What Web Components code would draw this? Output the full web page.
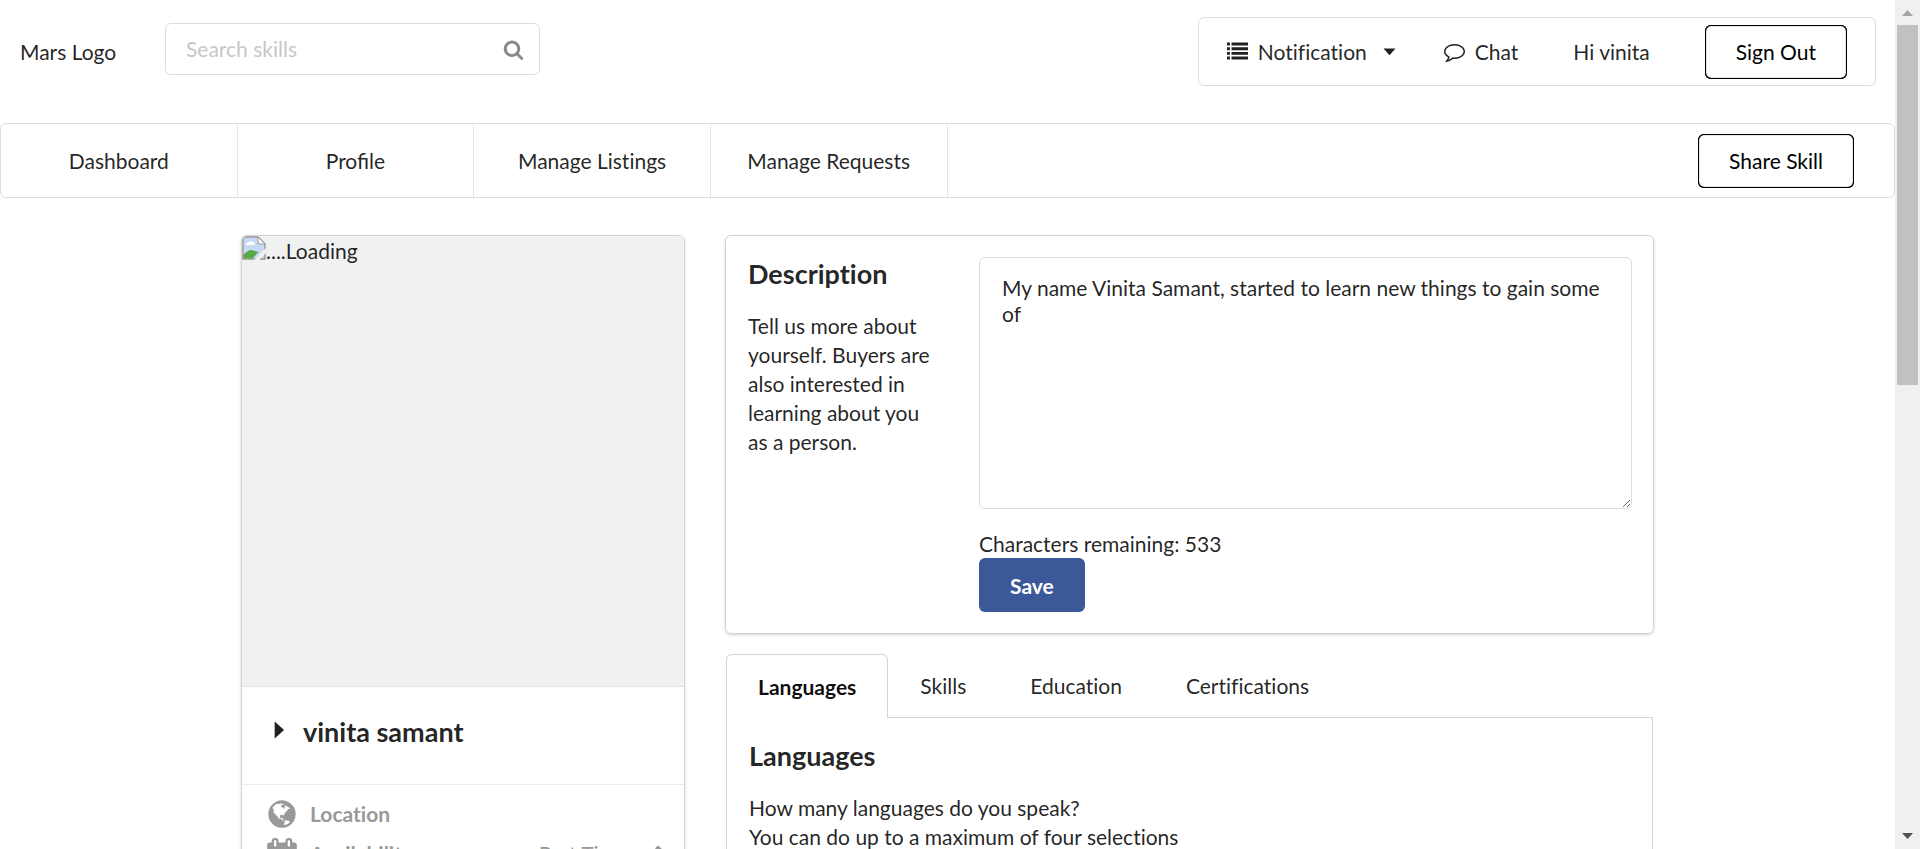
<!DOCTYPE html>
<html lang="en">
<head>
<meta charset="utf-8">
<title>Profile</title>
<style>
html, body { margin: 0; height: 100%; }
body { font: 21px/30px Lato, sans-serif; color: rgba(0,0,0,.87); background: #fff; overflow: hidden; font-variant-ligatures: no-common-ligatures; }
</style>
</head>
<body>
<mars-app></mars-app>
<script>
const ICONS = {
  search: '<path d="M1216 832q0-185-131.500-316.500t-316.500-131.500-316.500 131.500-131.500 316.500 131.500 316.500 316.500 131.500 316.500-131.500 131.500-316.500zm512 832q0 52-38 90t-90 38q-54 0-90-38l-343-342q-179 124-399 124-143 0-273.500-55.500t-225-150-150-225-55.500-273.500 55.500-273.500 150-225 225-150 273.500-55.500 273.500 55.500 225 150 150 225 55.500 273.500q0 220-124 399l343 343q37 37 37 90z"/>',
  list: '<path d="M0 130h250v250h-250zM384 130h1408v250h-1408zM0 530h250v250h-250zM384 530h1408v250h-1408zM0 930h250v250h-250zM384 930h1408v250h-1408zM0 1330h250v250h-250zM384 1330h1408v250h-1408z"/>',
  comment: '<path d="M896 384q-204 0-381.500 69.500t-282 187.500-104.500 255q0 112 71.500 213.500t201.500 175.500l87 50-27 96q-24 91-70 172 152-63 275-171l43-38 57 6q69 8 130 8 204 0 381.500-69.500t282-187.500 104.500-255-104.500-255-282-187.500-381.500-69.500zm896 512q0 174-120 321.500t-326 233-450 85.500q-70 0-145-8-198 175-460 242-49 14-114 22h-5q-15 0-27-10.500t-16-27.500v-1q-3-4-.5-12t2-10 4.500-9.500l6-9 7-8.500 8-9q7-8 31-34.500t34.500-38 31-39.500 32.500-51 27-59 26-76q-157-89-247.500-220t-90.500-281q0-174 120-321.500t326-233 450-85.500 450 85.500 326 233 120 321.500z"/>',
  down: '<path d="M384 640h1024l-512 576z"/>',
  right: '<path d="M500 256l700 640-700 640z"/>',
  world: '<path d="M896 128q209 0 385.500 103t279.500 279.500 103 385.500-103 385.500-279.500 279.500-385.500 103-385.500-103-279.500-279.500-103-385.500 103-385.500 279.500-279.500 385.500-103zm274 521q-2 1-9.500 9.500t-13.500 9.500q2 0 4.500-5t5-11 3.500-7q6-7 22-15 14-6 52-12 34-8 51 11-2-2 9.500-13t14.500-12q3-2 15-4.500t15-7.500l2-22q-12 1-17.500-7t-6.500-21q0 2-6 8 0-7-4.500-8t-11.500 1-9 1q-10-3-15-7.500t-8-16.500-4-15q-2-5-9.500-10.500t-9.500-10.500q-1-2-2.500-5.500t-3-6.500-4-5.500-5.500-2.500-7 5-7.500 10-4.500 5q-3-2-6-1.500t-4.500 1-4.500 3-5 3.500q-3 2-8.500 3t-8.500 2q15-5-1-11-10-4-16-3 9-4 7.500-12t-8.500-14h5q-1-4-8.500-8.500t-17.500-8.500-13-6q-8-5-34-9.500t-33-.5q-5 6-4.500 10.500t4 14 3.500 12.500q1 6-5.500 13t-6.500 12q0 7 14 15.500t10 21.500q-3 8-16 16t-16 12q-5 8-1.500 18.500t10.500 16.500q2 2 1.500 4t-3.500 4.500-5.500 4-6.500 3.500l-3 2q-11 5-20.500-6t-13.500-26q-7-25-16-30-23-8-29 1-5-13-41-26-25-9-58-4 6-1 0-15-7-15-19-12 3-6 4-17.500t1-13.500q3-13 12-23 1-1 7-8.500t9.500-13.500.5-6q35 4 50-11 5-5 11.500-17t10.500-17q9-6 14-5.500t14.500 5.500 14.500 5q14 1 15.500-11t-7.500-20q12 1 3-17-4-7-8-9-12-4-27 5-8 4 2 8-1-1-9.500 10.500t-16.500 17.500-16-5q-1-1-5.500-13.500t-9.500-13.500q-8 0-16 15 3-8-11-15t-24-8q19-12-8-27-7-4-20.500-5t-19.500 4q-5 7-5.500 11.500t5 8 10.500 5.500 11.500 4 8.500 3q14 10 8 14-2 1-8.500 3.500t-11.500 4.500-6 4q-3 4 0 14t-2 14q-5-5-9-17.500t-7-16.500q7 9-25 6l-10-1q-4 0-16 2t-20.500 1-13.500-8q-4-8 0-20 1-4 4-2-4-3-11-9.500t-10-8.500q-46 15-94 41 6 1 12-1 5-2 13-6.500t10-5.500q34-14 42-7l5-5q14 16 20 25-7-4-30-1-20 6-22 12 7 12 5 18-4-3-11.500-10t-14.500-11-15-5q-16 0-22 1-146 80-235 222 7 7 12 8 4 1 5 9t2.500 11 11.500-3q9 8 3 19 1-1 44 27 19 17 21 21 3 11-10 18-1-2-9-9t-9-4q-3 5 .5 18.500t10.500 12.500q-7 0-9.500 16t-2.500 35.500-1 23.500l2 1q-3 12 5.500 34.500t21.500 19.500q-13 3 20 43 6 8 8 9 3 2 12 7.500t15 10 10 10.500q4 5 10 22.500t14 23.500q-2 6 9.500 20t10.500 23q-1 0-2.500 1t-2.500 1q3 7 15.500 14t15.500 13q1 3 2 10t3 11 8 2q2-20-24-62-15-25-17-29-3-5-5.500-15.500t-4.500-14.500q2 0 6 1.500t8.500 3.500 7.500 4 2 3q-3 7 2 17.500t12 18.500 17 19 12 13q6 6 14 19.500t0 13.500q9 0 20 10.500t17 19.500q5 8 8 26t5 24q2 7 8.500 13.500t12.500 9.500l16 8 13 7q5 2 18.500 10.500t21.500 11.500q10 4 16 4t14.500-2.500 13.500-3.500q15-2 29 15t21 21q36 19 55 11-2 1 .5 7.500t8 15.500 9 14.500 5.500 8.500q5 6 18 15t18 15q6-4 7-9-3 8 7 20t18 10q14-3 14-32-31 15-49-18 0-1-2.500-5.500t-4-8.500-2.500-8.500 0-7.500 5-3q9 0 10-3.500t-2-12.500-4-13q-1-8-11-20t-12-15q-5 9-16 8t-16-9q0 1-1.500 5.500t-1.500 6.500q-13 0-15-1 1-3 2.500-17.500t3.500-22.500q1-4 5.500-12t7.500-14.500 4-12.500-4.500-9.500-17.500-2.500q-19 1-26 20-1 3-3 10.500t-5 11.500-9 7q-7 3-24 2t-24-5q-13-8-22.500-29t-9.500-37q0-10 2.500-26.500t3-25-5.500-24.500q3-2 9-9.500t10-10.500q2-1 4.500-1.500t4.500 0 4-1.500 3-6q-1-1-4-3-3-3-4-3 7 3 28.500-1.500t27.500 1.500q15 11 22-2 0-1-2.500-9.500t-.5-13.500q5 27 29 9 3 3 15.500 5t17.500 5q3 2 7 5.500t5.500 4.500 5-.5 8.500-6.500q10 14 12 24 11 40 19 44 7 3 11 2t4.500-9.500 0-14-1.500-12.500l-1-8v-18l-1-8q-15-3-18.500-12t1.500-18.500 15-18.500q1-1 8-3.500t15.500-6.500 12.500-8q21-19 15-35 7 0 11-9-1 0-5-3t-7.500-5-4.500-2q9-5 2-16 5-3 7.500-11t7.500-10q9 12 21 2 8-8 1-16 5-7 20.500-10.500t18.500-9.500q7 2 8-2t1-12 3-12q4-5 15-9t13-5l17-11q3-4 0-4 18 2 31-11 10-11-6-20 3-6-3-9.500t-15-5.500q3-1 11.500-.5t10.500-1.500q15-10-7-16-17-5-43 12zm-163 877q206-36 351-189-3-3-12.500-4.500t-12.500-3.500q-18-7-24-8 1-7-2.500-13t-8-9-12.500-8-11-7q-2-2-7-6t-7-5.500-7.500-4.500-8.500-2-10 1l-3 1q-3 1-5.500 2.500t-5.500 3-4 3 0 2.500q-21-17-36-22-5-1-11-5.500t-10.500-7-10-1.500-11.500 7q-5 5-6 15t-2 13q-7-5 0-17.500t2-18.500q-3-6-10.500-4.500t-12 4.500-11.500 8.500-9 6.500-8.500 5.500-8.500 7.500q-3 4-6 12t-5 11q-2-4-11.500-6.500t-9.500-5.500q2 10 4 35t5 38q7 31-12 48-27 25-29 40-4 22 12 26 0 7-8 20.500t-7 21.500q0 6 2 16z"/>',
  calendar: '<path d="M192 1664h288v-288h-288v288zm352 0h320v-288h-320v288zm-352-352h288v-320h-288v320zm352 0h320v-320h-320v320zm-352-384h288v-288h-288v288zm736 736h320v-288h-320v288zm-384-736h320v-288h-320v288zm768 736h288v-288h-288v288zm-384-352h320v-320h-320v320zm-352-864v-288q0-13-9.5-22.500t-22.500-9.500h-64q-13 0-22.500 9.500t-9.500 22.500v288q0 13 9.500 22.500t22.500 9.500h64q13 0 22.500-9.500t9.500-22.500zm736 864h288v-320h-288v320zm-384-384h320v-288h-320v288zm384 0h288v-288h-288v288zm32-480v-288q0-13-9.5-22.500t-22.500-9.500h-64q-13 0-22.500 9.500t-9.500 22.500v288q0 13 9.500 22.500t22.500 9.500h64q13 0 22.500-9.500t9.500-22.500zm384-64v1280q0 52-38 90t-90 38h-1408q-52 0-90-38t-38-90v-1280q0-52 38-90t90-38h128v-96q0-66 47-113t113-47h64q66 0 113 47t47 113v96h384v-96q0-66 47-113t113-47h64q66 0 113 47t47 113v96h128q52 0 90 38t38 90z"/>',
  write: '<path d="M491 1536l91-91-235-235-91 91v107h128v128h107zm523-928q0-22-22-22-10 0-17 7l-542 542q-7 7-7 17 0 22 22 22 10 0 17-7l542-542q7-7 7-17zm-54-192l416 416-832 832h-416v-416zm683 96q0 53-37 90l-166 166-416-416 166-165q36-38 90-38 53 0 91 38l235 234q37 39 37 91z"/>'
};

function define(name, css, html) {
  const template = document.createElement('template');
  template.innerHTML = `<style>*{box-sizing:border-box}:host{display:block;box-sizing:border-box}${css}</style>${html}`;
  customElements.define(name, class extends HTMLElement {
    constructor() {
      super();
      this.attachShadow({ mode: 'open' }).append(template.content.cloneNode(true));
    }
  });
}

customElements.define('ui-icon', class extends HTMLElement {
  connectedCallback() {
    if (this.shadowRoot) return;
    this.attachShadow({ mode: 'open' }).innerHTML =
      `<style>:host{display:block;flex:none;width:21px;height:21px}svg{display:block;width:100%;height:100%}</style>
       <svg viewBox="0 0 1792 1792" fill="currentColor" aria-hidden="true">${ICONS[this.getAttribute('name')]}</svg>`;
  }
});

define('ui-button', `
  button { display: block; height: 54px; padding: 0 31px; border: 0; border-radius: 6px; box-shadow: inset 0 0 0 1px #000, inset 0 0 1px 1px #000;
    background: #fff; color: #000; font: inherit; line-height: 21px; }
  :host([primary]) button { box-shadow: none; background: #3b5998; color: #fff; font-weight: 700; }
`, `<button type="button"><slot></slot></button>`);

define('skill-search', `
  :host { width: 375px; }
  label { display: flex; align-items: center; height: 52px; padding: 0 15px 0 20px;
    border: 1px solid #dcddde; border-radius: 6px; }
  input { flex: 1; min-width: 0; border: 0; padding: 0; outline: 0; background: none; font: inherit; color: inherit; }
  input::placeholder { color: #c7c7c7; opacity: 1; }
  ui-icon { color: #8a8a8a; }
`, `<label><input type="text" placeholder="Search skills" aria-label="Search skills"><ui-icon name="search"></ui-icon></label>`);

define('account-menu', `
  nav { display: flex; align-items: center; height: 69px; padding: 0 28px; border: 1px solid #dcddde; border-radius: 6px; }
  a { display: flex; align-items: center; color: inherit; text-decoration: none; white-space: nowrap; }
  .notify { gap: 10px; margin-right: 44px; }
  .chat { gap: 10px; margin-right: 55px; }
  .hi { margin-right: 55px; }
  .notify ui-icon:last-child { margin-left: 2px; }
`, `<nav aria-label="Account">
  <a class="notify" href="#"><ui-icon name="list"></ui-icon><span>Notification</span><ui-icon name="down"></ui-icon></a>
  <a class="chat" href="#"><ui-icon name="comment"></ui-icon><span>Chat</span></a>
  <a class="hi" href="#">Hi vinita</a>
  <ui-button>Sign Out</ui-button>
</nav>`);

define('top-bar', `
  :host { display: flex; align-items: flex-start; padding: 17px 19px 0 20px; height: 123px; }
  .brand { color: inherit; text-decoration: none; margin-top: 20px; width: 145px; }
  skill-search { margin-top: 6px; }
  account-menu { margin-left: auto; }
`, `<a class="brand" href="#">Mars Logo</a><skill-search></skill-search><account-menu></account-menu>`);

define('section-nav', `
  nav { display: flex; align-items: center; height: 75px; border: 1px solid #dcddde; border-radius: 6px; }
  a { display: flex; align-items: center; justify-content: center; flex: 0 0 12.5%; height: 100%;
    border-right: 1px solid #e6e6e7; color: inherit; text-decoration: none; white-space: nowrap; }
  .profile { font-variant-ligatures: normal; }
  ui-button { margin: 0 40px 0 auto; }
`, `<nav aria-label="Sections"><a href="#">Dashboard</a><a class="profile" href="#">Profile</a><a href="#">Manage Listings</a><a href="#">Manage Requests</a><ui-button>Share Skill</ui-button></nav>`);

define('detail-row', `
  :host { display: flex; align-items: center; height: 40px; color: #999; }
  b { margin-left: 12px; flex: 1; }
`, `<slot name="icon"></slot><b><slot></slot></b><slot name="value"></slot>`);

define('profile-card', `
  :host { border: 1px solid #d4d4d5; border-radius: 6px; box-shadow: 0 1px 3px #d4d4d5; overflow: hidden; background: #fff; }
  .photo { display: flex; height: 451px; background: #f1f1f1; border-bottom: 1px solid #e4e4e4; }
  .photo svg { flex: none; width: 24px; height: 24px; }
  .name { display: flex; align-items: center; height: 98px; padding: 0 22px 8px; border-bottom: 1px solid #ececec; }
  h2 { margin: 0 0 0 7px; font-size: 27px; line-height: 36px; }
  .name ui-icon { width: 32px; height: 24px; margin-bottom: 4px; }
  .details { padding: 9px 20px 40px 24px; }
  .details ui-icon { width: 32px; height: 32px; }
  .value { display: flex; align-items: center; gap: 16px; }
  .value ui-icon { width: 21px; height: 21px; }
`, `<div class="photo" role="img" aria-label="Loading">
    <svg viewBox="0 0 24 24">
      <path d="M1 1h15l7 7v15H1z" fill="#c6d9f5" stroke="#9a9a9a" stroke-width="1.500"/>
      <path d="M4 9q0-3 3-3 2-2 4 0 2 0 2 3z" fill="#fff"/>
      <path d="M1.500 22.500V19q6-7 11-4l4 1-6 6.500z" fill="#58a843"/>
      <path d="M16 1l7 7h-7z" fill="#fff" stroke="#9a9a9a"/>
      <path d="M12 24L24 12v5l-7 7z" fill="#f1f1f1"/>
    </svg><span>....Loading</span></div>
  <div class="name"><ui-icon name="right"></ui-icon><h2>vinita samant</h2></div>
  <div class="details">
    <detail-row><ui-icon slot="icon" name="world"></ui-icon>Location</detail-row>
    <detail-row><ui-icon slot="icon" name="calendar"></ui-icon>Availability<span class="value" slot="value">Part Time<ui-icon name="write"></ui-icon></span></detail-row>
  </div>`);

define('description-card', `
  :host { display: grid; grid-template-columns: 185px 1fr; gap: 46px; padding: 21px 21px 21px 22px;
    border: 1px solid #d4d4d5; border-radius: 6px; box-shadow: 0 1px 3px #d4d4d5; }
  h3 { margin: 0 0 20px; font-size: 27px; line-height: 34px; }
  p { margin: 0; line-height: 29px; }
  textarea { display: block; width: 100%; height: 252px; padding: 17px 22px; border: 1px solid #dcddde; border-radius: 6px;
    font: inherit; line-height: 26px; color: inherit; background: #fff; resize: vertical; outline: 0; }
  .count { margin-top: 21px; line-height: 28px; }
  ui-button { width: max-content; }
`, `<div><h3>Description</h3><p>Tell us more about yourself. Buyers are also interested in learning about you as a person.</p></div>
  <div><textarea aria-label="Description">My name Vinita Samant, started to learn new things to gain some of</textarea>
  <div class="count">Characters remaining: 533</div><ui-button primary>Save</ui-button></div>`);

define('skill-tabs', `
  .tabs { display: flex; height: 64px; border-bottom: 1px solid #d4d4d5; }
  button { height: 64px; padding: 0 32px; border: 0; background: none; font: inherit; color: inherit; }
  button[aria-selected=true] { padding: 0 31px; border: 1px solid #d4d4d5; border-bottom: 0; border-radius: 6px 6px 0 0;
    background: #fff; font-weight: 700; color: rgba(0,0,0,.95); }
  .panel { border: 1px solid #d4d4d5; border-top: 0; padding: 21px 22px 40px; }
  h3 { margin: 0 0 20px; font-size: 27px; line-height: 34px; }
  p { margin: 0; line-height: 29px; }
`, `<div class="tabs" role="tablist"><button role="tab" aria-selected="true">Languages</button><button role="tab" aria-selected="false">Skills</button><button role="tab" aria-selected="false">Education</button><button role="tab" aria-selected="false">Certifications</button></div>
  <div class="panel" role="tabpanel"><h3>Languages</h3><p>How many languages do you speak?<br>You can do up to a maximum of four selections</p></div>`);

define('scroll-rail', `
  :host { display: flex; flex-direction: column; flex: 0 0 25px; background: #f0f0f0; padding: 0 2px; }
  svg { display: block; flex: none; width: 21px; height: 25px; }
  .track { flex: 1; }
  .thumb { height: 45%; background: #c1c1c1; }
`, `<svg viewBox="0 0 21 25"><path d="M5 16h11l-5.500-6z" fill="#a3a3a3"/></svg>
  <div class="track"><div class="thumb"></div></div>
  <svg viewBox="0 0 21 25"><path d="M5 9h11l-5.500 6z" fill="#505050"/></svg>`);

define('mars-app', `
  :host { display: flex; height: 100vh; overflow: hidden; }
  .page { flex: 1; min-width: 0; overflow: hidden; }
  main { display: grid; grid-template-columns: 444fr 929fr; gap: 40px; max-width: 1413px; margin: 37px auto 0; align-items: start; }
  .right { display: grid; gap: 20px; }
  skill-tabs { margin: 0 1px; }
`, `<div class="page"><top-bar></top-bar><section-nav></section-nav>
  <main><profile-card></profile-card><div class="right"><description-card></description-card><skill-tabs></skill-tabs></div></main></div>
  <scroll-rail aria-hidden="true"></scroll-rail>`);
</script>
</body>
</html>
